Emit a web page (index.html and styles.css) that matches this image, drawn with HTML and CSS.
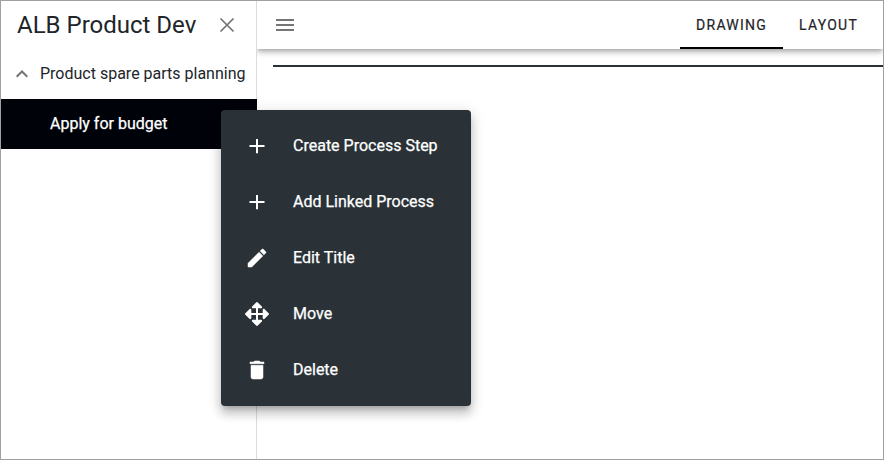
FILE: index.html
```html
<!DOCTYPE html>
<html lang="en">
<head>
<meta charset="utf-8">
<title>ALB Product Dev</title>
<link rel="stylesheet" href="styles.css">
</head>
<body>
<div class="app">
  <aside class="sidebar">
    <header class="sidebar-head">
      <h1 class="title">ALB Product Dev</h1>
      <svg class="close" viewBox="0 0 16 16"><path d="M1.500 1.500l13 13M14.500 1.500l-13 13"/></svg>
    </header>
    <div class="group">
      <svg class="chevron" viewBox="0 0 16 16"><path d="M2.700 10.800L8 5.500l5.300 5.300"/></svg>
      <span>Product spare parts planning</span>
    </div>
    <div class="step">Apply for budget</div>
  </aside>
  <main class="main">
    <header class="toolbar">
      <svg class="burger" viewBox="0 0 18 12"><path d="M0 0h18v2H0zM0 5h18v2H0zM0 10h18v2H0z"/></svg>
      <nav class="tabs">
        <a class="tab active">DRAWING</a>
        <a class="tab">LAYOUT</a>
      </nav>
    </header>
    <div class="canvas"></div>
  </main>
  <div class="menu">
    <div class="item"><svg viewBox="0 0 24 24"><path d="M19.500 13H13v6.300h-2V13H4.500v-2H11V5h2v6h6.500z"/></svg><span>Create Process Step</span></div>
    <div class="item"><svg viewBox="0 0 24 24"><path d="M19.500 13H13v6.300h-2V13H4.500v-2H11V5h2v6h6.500z"/></svg><span>Add Linked Process</span></div>
    <div class="item"><svg class="bold" viewBox="0 0 24 24"><path d="M3 17.25V21h3.75L17.81 9.94l-3.75-3.75L3 17.25zM20.71 7.04c.39-.39.39-1.02 0-1.41l-2.34-2.34a.9959.9959 0 0 0-1.41 0l-1.83 1.83 3.75 3.75 1.83-1.83z"/></svg><span>Edit Title</span></div>
    <div class="item"><svg viewBox="0 0 24 24"><path d="M11.200.4a1.100 1.100 0 0 1 1.600 0l4 4c.7.7.2 1.900-.8 1.900h-3V11h4.700V8c0-1 1.200-1.500 1.900-.8l4 4a1.100 1.100 0 0 1 0 1.600l-4 4c-.7.7-1.900.2-1.900-.8v-3H13v4.700h3c1 0 1.500 1.200.8 1.900l-4 4a1.100 1.100 0 0 1-1.600 0l-4-4c-.7-.7-.2-1.900.8-1.900h3V13H6.300v3c0 1-1.200 1.500-1.900.8l-4-4a1.100 1.100 0 0 1 0-1.600l4-4C5.100 6.500 6.300 7 6.300 8v3H11V6.300H8c-1 0-1.500-1.200-.8-1.900z"/></svg><span>Move</span></div>
    <div class="item"><svg class="bold" viewBox="0 0 24 24"><path d="M6 19c0 1.100.9 2 2 2h8c1.100 0 2-.9 2-2V7.300H6V19zM19 4h-3.500l-1-1h-5l-1 1H5v1.700h14V4z"/></svg><span>Delete</span></div>
  </div>
</div>
</body>
</html>
```

FILE: styles.css
```css
* { box-sizing: border-box; }
body { margin: 0; font-family: Roboto, "Liberation Sans", sans-serif; font-size: 16px; color: #212529; }
svg { display: block; flex: none; }
.app { position: relative; display: flex; width: 884px; height: 460px; border: 1px solid #a0a0a0; background: #fff; overflow: hidden; }

.sidebar { position: relative; z-index: 1; width: 256px; background: #fff; border-right: 1px solid #dcdcdc; flex: none; }
.sidebar-head { display: flex; align-items: center; height: 48px; padding-left: 16px; }
.title { margin: 0; width: 202px; font-size: 24px; font-weight: 400; line-height: 32px; white-space: nowrap; }
.close { width: 16px; height: 16px; fill: none; stroke: #6f7276; stroke-width: 1.7; }
.group { display: flex; align-items: center; height: 50px; padding: 0 0 1px 13px; gap: 10px; white-space: nowrap; }
.chevron { width: 16px; height: 16px; fill: none; stroke: #757575; stroke-width: 2; }
.step { width: 256px; height: 50px; padding-left: 49px; line-height: 50px; background: #00020a; color: #fff; -webkit-text-stroke: .25px #fff; }

.main { flex: 1; min-width: 0; }
.toolbar { display: flex; align-items: center; justify-content: space-between; height: 48px; padding: 0 9px 0 19px; background: #fff; box-shadow: 0 2px 4px -1px rgba(0,0,0,.2), 0 4px 5px rgba(0,0,0,.14), 0 1px 10px rgba(0,0,0,.12); }
.burger { width: 18px; height: 12px; fill: #757575; }
.tabs { display: flex; height: 48px; }
.tab { padding: 0 16px; border-bottom: 2px solid transparent; font-size: 14px; line-height: 48px; letter-spacing: 1.25px; -webkit-text-stroke: .2px currentColor; }
.tab.active { border-color: #000; }
.canvas { height: 18px; margin-left: 16px; border-bottom: 2px solid #2a3136; }

.menu { position: absolute; z-index: 2; left: 220px; top: 109px; width: 250px; padding: 8px 0; border-radius: 4px; background: #2a3237; color: #fff; box-shadow: 0 5px 5px -3px rgba(0,0,0,.2), 0 8px 10px 1px rgba(0,0,0,.14), 0 3px 14px 2px rgba(0,0,0,.12); }
.item { display: flex; align-items: center; gap: 24px; height: 56px; padding-left: 24px; -webkit-text-stroke: .25px #fff; }
.item span { padding-bottom: 2px; }
.item svg { width: 24px; height: 24px; fill: #fff; }
.item svg.bold { stroke: #fff; stroke-width: .5; }
```
